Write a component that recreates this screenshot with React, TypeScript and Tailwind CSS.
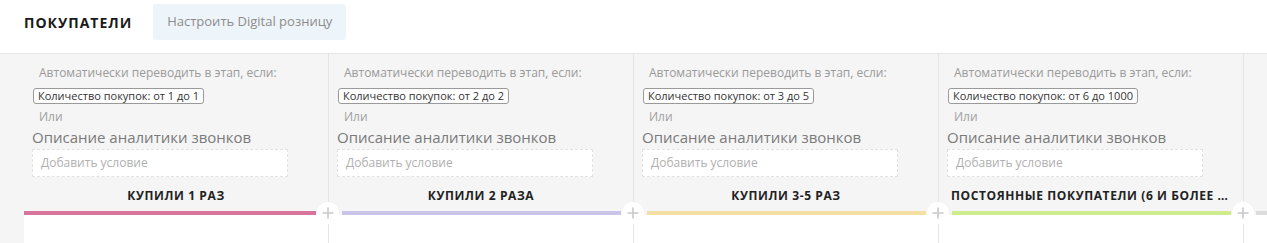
import React from "react";

const cols = [
  { tag: "Количество покупок: от 1 до 1", title: "КУПИЛИ 1 РАЗ", bar: "bg-[#d7749b]", first: true },
  { tag: "Количество покупок: от 2 до 2", title: "КУПИЛИ 2 РАЗА", bar: "bg-[#cac5e8]", first: false },
  { tag: "Количество покупок: от 3 до 5", title: "КУПИЛИ 3-5 РАЗ", bar: "bg-[#f4e0a2]", first: false },
  { tag: "Количество покупок: от 6 до 1000", title: "ПОСТОЯННЫЕ ПОКУПАТЕЛИ (6 И БОЛЕЕ РАЗ)", bar: "bg-[#cfec8c]", first: false },
];

function PlusCircle() {
  return (
    <div className="absolute right-[-11px] top-[-9px] z-10 flex h-[22px] w-[22px] items-center justify-center rounded-full bg-white">
      <svg width="12" height="12" viewBox="0 0 12 12">
        <path d="M6 0.5V11.5M0.5 6H11.5" stroke="#c9c9c9" strokeWidth="1.6" />
      </svg>
    </div>
  );
}

export default function App() {
  return (
    <div
      className="h-[243px] w-[1267px] overflow-hidden bg-white"
      style={{ fontFamily: '"Open Sans", "Noto Sans", sans-serif' }}
    >
      <div className="flex h-[53px] items-start pl-[24px] pt-[4px]">
        <div className="flex h-[36px] items-center text-[14px] font-bold tracking-[1px] text-[#1a1a1a]">
          ПОКУПАТЕЛИ
        </div>
        <div className="ml-[21px] flex h-[36px] w-[193px] items-center justify-center rounded-[3px] bg-[#eef5fa] text-[13px] text-[#8c8c8c]">
          Настроить Digital розницу
        </div>
      </div>
      <div className="flex h-[190px] border-t border-[#e6e6e6] bg-[#f5f5f5] pl-[24px]">
        {cols.map((c, i) => (
          <div key={i} className="flex w-[305px] shrink-0 flex-col border-r border-[#e6e6e6]">
            <div className="mt-[9px] pl-[15px] text-[12px] leading-[20px] text-[#9a9a9a]">
              Автоматически переводить в этап, если:
            </div>
            <div className="ml-[9px] mt-[5px] flex h-[16px] items-center self-start rounded-[3px] border border-[#9a9a9a] bg-white px-[4px] text-[11px] leading-[14px] text-[#333]">
              {c.tag}
            </div>
            <div className="mt-[3px] pl-[15px] text-[12px] leading-[20px] text-[#a0a0a0]">Или</div>
            <div className="pl-[8px] text-[15px] leading-[20px] text-[#7a7a7a]">Описание аналитики звонков</div>
            <div className="ml-[8px] mt-[2px] flex h-[28px] w-[256px] items-center border border-dashed border-[#e2e2e2] bg-white pl-[8px] text-[12px] text-[#b0b0b0]">
              Добавить условие
            </div>
            <div className="mt-[9px] truncate px-[12px] text-center text-[12px] font-bold leading-[20px] tracking-[0.6px] text-[#222]">
              {c.title}
            </div>
            <div className="relative mt-[5px]">
              <div className={`h-[4px] ${c.bar} ${c.first ? "" : "ml-[13px]"} mr-[12px]`} />
              <PlusCircle />
            </div>
            <div className="flex-1 bg-white" />
          </div>
        ))}
        <div className="flex w-[305px] shrink-0 flex-col">
          <div className="h-[157px]" />
          <div className="h-[4px] ml-[12px] bg-[#dcdcdc]" />
          <div className="flex-1 bg-white" />
        </div>
      </div>
    </div>
  );
}
